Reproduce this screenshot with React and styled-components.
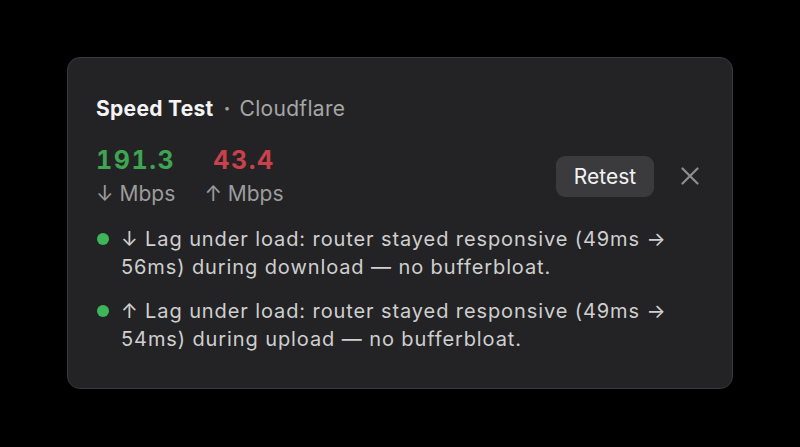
import React from "react";
import styled, { createGlobalStyle } from "styled-components";

const Global = createGlobalStyle`
  html, body { margin: 0; padding: 0; background: #000; }
  body { font-family: Inter, "Noto Sans", sans-serif; -webkit-font-smoothing: antialiased; }
`;

const Page = styled.div`
  width: 800px;
  height: 447px;
  display: flex;
  align-items: flex-start;
  justify-content: center;
  padding-top: 57px;
  box-sizing: border-box;
`;

const Card = styled.div`
  width: 666px;
  height: 332px;
  box-sizing: border-box;
  background: #232325;
  border: 1px solid #3b3b3e;
  border-radius: 13px;
  padding: 38px 28px 0 28px;
  display: flex;
  flex-direction: column;
`;

const Header = styled.div`
  display: flex;
  align-items: baseline;
  font-size: 21px;
  line-height: 26px;
`;

const Title = styled.span`
  color: #f4f4f4;
  font-weight: 700;
  letter-spacing: 0.3px;
`;

const Dot = styled.span`
  color: #a0a0a0;
  margin: 0 9px 0 10px;
  font-weight: 700;
`;

const Source = styled.span`
  color: #a6a6a6;
  letter-spacing: 0.3px;
`;

const StatsRow = styled.div`
  display: flex;
  align-items: center;
  margin-top: 23px;
`;

const Stats = styled.div`
  display: flex;
  gap: 29px;
  flex: 1;
`;

const Stat = styled.div`
  display: flex;
  flex-direction: column;
  align-items: center;
`;

const Value = styled.span`
  font-size: 25px;
  line-height: 30px;
  font-weight: 700;
  color: ${(p) => p.$color};
  letter-spacing: 1.6px;
  font-variant-numeric: tabular-nums;
`;

const Unit = styled.span`
  font-size: 21px;
  line-height: 26px;
  color: #9c9c9c;
  margin-top: 6px;
`;

const Button = styled.button`
  background: #3b3b3e;
  border: none;
  border-radius: 9px;
  color: #f2f2f2;
  font-family: inherit;
  font-size: 21px;
  height: 41px;
  width: 98px;
  padding: 0;
`;

const Close = styled.button`
  background: none;
  border: none;
  padding: 0;
  width: 18px;
  height: 18px;
  display: flex;
  align-items: center;
  justify-content: center;
  margin: 0 5px 0 27px;
`;

const List = styled.div`
  display: flex;
  flex-direction: column;
  gap: 16px;
  margin-top: 18px;
`;

const Item = styled.div`
  display: flex;
  align-items: flex-start;
  font-size: 20px;
  line-height: 28px;
  letter-spacing: 0.9px;
  color: #cfcfcf;
  padding-right: 10px;
`;

const Bullet = styled.span`
  width: 12px;
  height: 12px;
  border-radius: 50%;
  background: #3fb559;
  flex: none;
  margin: 8px 12px 0 1px;
`;

const items = [
  "↓ Lag under load: router stayed responsive (49ms → 56ms) during download — no bufferbloat.",
  "↑ Lag under load: router stayed responsive (49ms → 54ms) during upload — no bufferbloat.",
];

export default function App() {
  return (
    <>
      <Global />
      <Page>
        <Card>
          <Header>
            <Title>Speed Test</Title>
            <Dot>·</Dot>
            <Source>Cloudflare</Source>
          </Header>
          <StatsRow>
            <Stats>
              <Stat>
                <Value $color="#3ea552">191.3</Value>
                <Unit>↓ Mbps</Unit>
              </Stat>
              <Stat>
                <Value $color="#c9414b">43.4</Value>
                <Unit>↑ Mbps</Unit>
              </Stat>
            </Stats>
            <Button>Retest</Button>
            <Close aria-label="Close">
              <svg width="18" height="18" viewBox="0 0 18 18">
                <path d="M1.5 1.5 L16.5 16.5 M16.5 1.5 L1.5 16.5" stroke="#8e8e90" strokeWidth="2.2" strokeLinecap="round" />
              </svg>
            </Close>
          </StatsRow>
          <List>
            {items.map((t) => (
              <Item key={t}>
                <Bullet />
                <span>{t}</span>
              </Item>
            ))}
          </List>
        </Card>
      </Page>
    </>
  );
}
